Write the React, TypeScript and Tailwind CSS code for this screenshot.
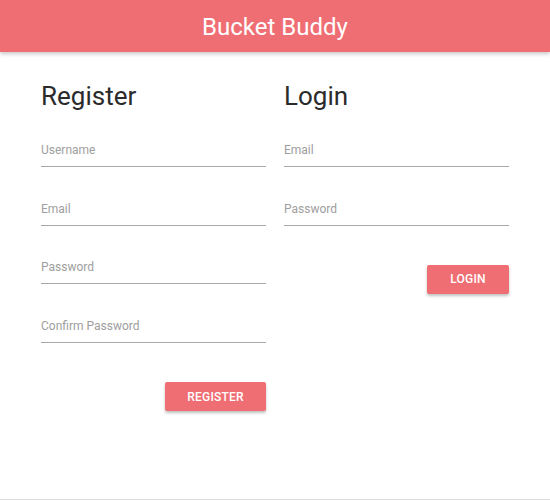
import React from "react";

function Field({ label }: { label: string }) {
  return (
    <div className="flex flex-col">
      <div className="text-[12px] leading-[16px] text-[#9e9e9e]">{label}</div>
      <div className="h-[9px] border-b border-[#a8a8a8]" />
    </div>
  );
}

export default function App() {
  return (
    <div
      className="h-[500px] flex flex-col bg-white border-b border-[#dcdcdc]"
      style={{ fontFamily: "Roboto, 'Liberation Sans', sans-serif" }}
    >
      <header className="h-[52px] shrink-0 bg-[#ef6e73] flex items-center justify-center shadow-[0_2px_4px_rgba(0,0,0,0.22)] relative z-10">
        <h1 className="text-white text-[24px] leading-[30px] font-normal mt-[1px]">Bucket Buddy</h1>
      </header>
      <main className="flex justify-center gap-[18px] pt-[29px]">
        <section className="w-[225px] flex flex-col">
          <h2 className="text-[26px] leading-[30px] text-[#2b2b2b] mb-[31px]">Register</h2>
          <div className="flex flex-col gap-[33.7px]">
            <Field label="Username" />
            <Field label="Email" />
            <Field label="Password" />
            <Field label="Confirm Password" />
          </div>
          <div className="flex justify-end mt-[39px]">
            <button className="w-[101px] h-[29px] bg-[#ef6e73] text-white text-[12px] font-medium tracking-[0.2px] uppercase rounded-[2px] shadow-[0_2px_3px_rgba(0,0,0,0.25)]">
              Register
            </button>
          </div>
        </section>
        <section className="w-[225px] flex flex-col">
          <h2 className="text-[26px] leading-[30px] text-[#2b2b2b] mb-[31px]">Login</h2>
          <div className="flex flex-col gap-[33.7px]">
            <Field label="Email" />
            <Field label="Password" />
          </div>
          <div className="flex justify-end mt-[39px]">
            <button className="w-[82px] h-[29px] bg-[#ef6e73] text-white text-[12px] font-medium tracking-[0.2px] uppercase rounded-[2px] shadow-[0_2px_3px_rgba(0,0,0,0.25)]">
              Login
            </button>
          </div>
        </section>
      </main>
    </div>
  );
}
